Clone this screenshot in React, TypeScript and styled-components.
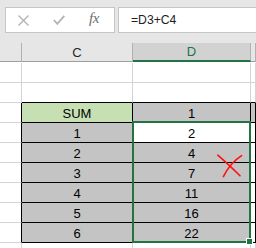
import styled, { createGlobalStyle } from 'styled-components';

const GREEN = '#217346';
const LIGHT = '#d4d4d4';
const BLACK = '#000000';
const GRAY = '#c4c4c4';

const GlobalStyle = createGlobalStyle`
    html, body {
        margin: 0;
        padding: 0;
        background: #ffffff;
    }
    body {
        font-family: 'Liberation Sans', Arial, sans-serif;
    }
`;

type CellSpec = { text?: string; bg?: string; right?: string; bottom?: string };

const blank = (): CellSpec[] => [{}, {}, {}, {}];

const ROWS: CellSpec[][] = [
    blank(),
    [{}, { bottom: BLACK }, { bottom: BLACK }, { bottom: BLACK }],
    [
        { right: BLACK },
        { text: 'SUM', bg: '#c6e0b4', right: BLACK, bottom: BLACK },
        { text: '1', bg: GRAY, right: BLACK, bottom: BLACK },
        { bg: GRAY, right: BLACK, bottom: BLACK },
    ],
    ...[
        ['1', '2'],
        ['2', '4'],
        ['3', '7'],
        ['4', '11'],
        ['5', '16'],
        ['6', '22'],
    ].map(([c, d], i) => [
        { right: BLACK },
        { text: c, bg: GRAY, right: BLACK, bottom: BLACK },
        { text: d, bg: i === 0 ? '#ffffff' : GRAY, right: BLACK, bottom: BLACK },
        { right: BLACK, bottom: BLACK },
    ]),
    blank(),
];

export default function App() {
    return (
        <Page>
            <GlobalStyle />
            <FormulaBar>
                <IconBox>
                    <svg width='11' height='11' viewBox='0 0 11 11'>
                        <path d='M0.5 0.5 L10.5 10.5 M10.5 0.5 L0.5 10.5' stroke='#b3b3b3' strokeWidth='1.4' fill='none' />
                    </svg>
                    <svg width='12' height='10' viewBox='0 0 12 10'>
                        <path d='M0.8 5 L4.3 8.8 L11.3 0.8' stroke='#b3b3b3' strokeWidth='1.8' fill='none' />
                    </svg>
                    <Fx>fx</Fx>
                </IconBox>
                <FormulaInput>=D3+C4</FormulaInput>
            </FormulaBar>
            <Grid>
                <HeaderCell />
                <HeaderCell>C</HeaderCell>
                <HeaderCell $selected>D</HeaderCell>
                <HeaderCell />
                {ROWS.map((row, r) =>
                    row.map((cell, c) => (
                        <Cell
                            key={`${r}-${c}`}
                            $bg={cell.bg ?? '#ffffff'}
                            $right={cell.right ?? LIGHT}
                            $bottom={cell.bottom ?? LIGHT}
                        >
                            {cell.text}
                        </Cell>
                    ))
                )}
            </Grid>
            <Selection />
            <FillHandle />
            <Scribble width='28' height='26' viewBox='0 0 28 26'>
                <path d='M1.8 2.2 Q12 11 24 22.8' stroke='#ff1010' strokeWidth='1.6' fill='none' strokeLinecap='round' />
                <path d='M25.6 2.6 Q14 10 7.4 23.6' stroke='#ff1010' strokeWidth='1.6' fill='none' strokeLinecap='round' />
            </Scribble>
        </Page>
    );
}

const Page = styled.div`
    position: relative;
    width: 256px;
    height: 248px;
    overflow: hidden;
    background: #ffffff;
`;

const FormulaBar = styled.div`
    height: 43px;
    box-sizing: border-box;
    padding: 7px 0 0 5px;
    display: flex;
    gap: 3px;
    background: #e6e6e6;
`;

const IconBox = styled.div`
    width: 110px;
    height: 26px;
    box-sizing: border-box;
    flex-shrink: 0;
    display: flex;
    align-items: center;
    gap: 24px;
    padding-left: 12px;
    background: #ffffff;
    border: 1px solid #c6c6c6;
`;

const Fx = styled.span`
    font-family: 'Liberation Serif', 'Times New Roman', serif;
    font-style: italic;
    font-size: 15px;
    color: #6e6e6e;
    margin-top: -3px;
    letter-spacing: -0.5px;
`;

const FormulaInput = styled.div`
    width: 160px;
    height: 26px;
    box-sizing: border-box;
    flex-shrink: 0;
    padding-left: 12px;
    display: flex;
    align-items: center;
    font-size: 12.2px;
    color: #222222;
    background: #ffffff;
    border: 1px solid #c6c6c6;
`;

const Grid = styled.div`
    display: grid;
    grid-template-columns: 22px 111px 118px 1fr;
    grid-auto-rows: 20px;
`;

const HeaderCell = styled.div<{ $selected?: boolean }>`
    box-sizing: border-box;
    height: 19px;
    display: flex;
    align-items: center;
    justify-content: center;
    font-size: 13px;
    color: ${(p) => (p.$selected ? GREEN : '#262626')};
    background: ${(p) => (p.$selected ? '#d2d2d2' : '#e6e6e6')};
    border-right: 1px solid #b1b1b1;
    border-bottom: ${(p) => (p.$selected ? `2px solid ${GREEN}` : '1px solid #9e9e9e')};
`;

const Cell = styled.div<{ $bg: string; $right: string; $bottom: string }>`
    box-sizing: border-box;
    display: flex;
    align-items: center;
    justify-content: center;
    padding-top: 1px;
    font-size: 13px;
    color: #000000;
    background: ${(p) => p.$bg};
    border-right: 1px solid ${(p) => p.$right};
    border-bottom: 1px solid ${(p) => p.$bottom};
`;

const Selection = styled.div`
    position: absolute;
    left: 132px;
    top: 121px;
    width: 119px;
    height: 122px;
    box-sizing: border-box;
    border: 2px solid ${GREEN};
    pointer-events: none;
`;

const FillHandle = styled.div`
    position: absolute;
    left: 246px;
    top: 238px;
    width: 5px;
    height: 5px;
    background: ${GREEN};
    border: 1px solid #ffffff;
`;

const Scribble = styled.svg`
    position: absolute;
    left: 216px;
    top: 153px;
`;
